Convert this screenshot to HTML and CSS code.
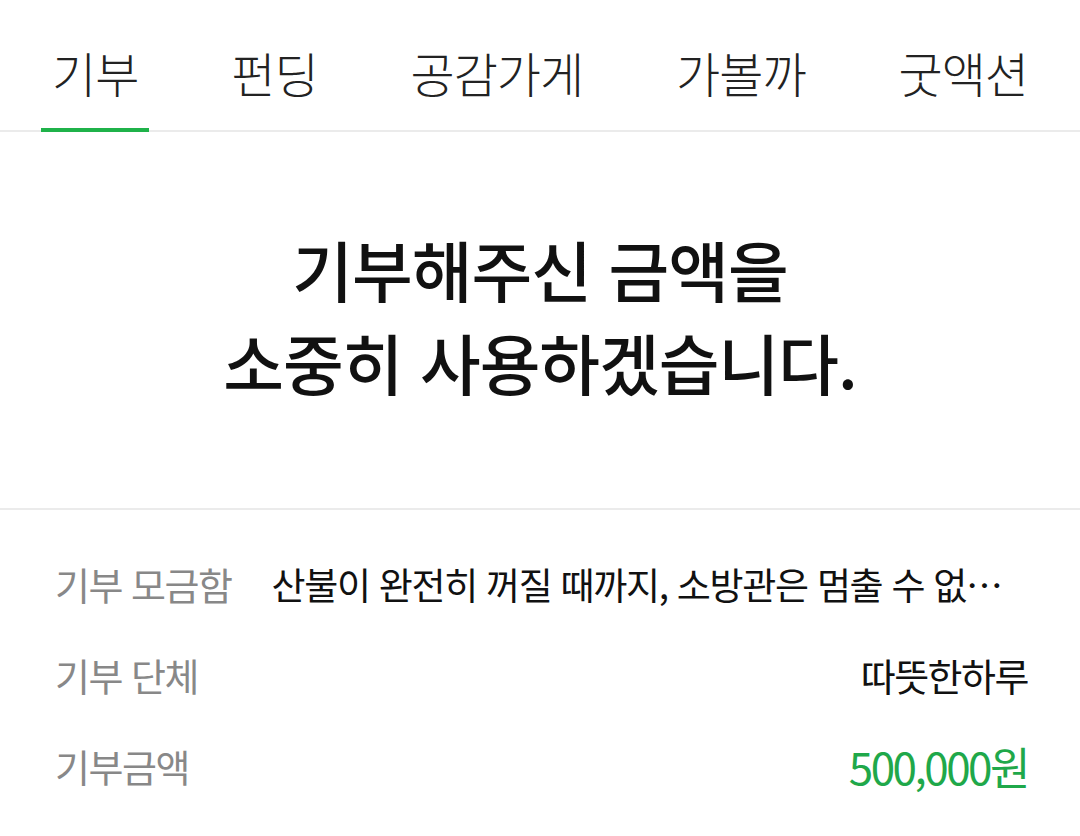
FILE: index.html
```html
<!DOCTYPE html>
<html lang="ko">
<head>
  <meta charset="UTF-8">
  <meta name="viewport" content="width=device-width, initial-scale=1.0">
  <title>기부</title>
  <link rel="stylesheet" href="styles.css">
</head>
<body>
  <nav class="tabs">
    <a class="tab active">기부</a>
    <a class="tab">펀딩</a>
    <a class="tab">공감가게</a>
    <a class="tab">가볼까</a>
    <a class="tab">굿액션</a>
  </nav>

  <section class="thanks">
    <h1>기부해주신 금액을<br>소중히 사용하겠습니다.</h1>
  </section>

  <div class="info">
    <div class="row">
      <span class="label">기부 모금함</span>
      <span class="value title">산불이 완전히 꺼질 때까지, 소방관은 멈출 수 없…</span>
    </div>
    <div class="row">
      <span class="label">기부 단체</span>
      <span class="value">따뜻한하루</span>
    </div>
    <div class="row">
      <span class="label">기부금액</span>
      <span class="value amount">500,000원</span>
    </div>
  </div>
</body>
</html>
```

FILE: styles.css
```css
*,*::before,*::after{
  margin: 0;
  padding: 0;
  box-sizing: border-box;
}
body{
  width: 100%;
  overflow: hidden;
  background: #fff;
  color: #111;
  font-family: "Noto Sans CJK KR", "Noto Sans", sans-serif;
}

.tabs{
  display: flex;
  justify-content: space-between;
  padding: 0 41px;
  height: 132px;
  border-bottom: 2px solid #ebebeb;
}
.tabs .tab{
  display: flex;
  align-items: center;
  padding: 16px 11px 0;
  font-size: 48px;
  font-weight: 300;
  letter-spacing: -1px;
  color: #222;
  border-bottom: 4px solid transparent;
  margin-bottom: -2px;
}
.tabs .tab.active{
  border-bottom-color: #1fb24a;
}

.thanks{
  height: 378px;
  display: flex;
  align-items: center;
  justify-content: center;
  border-bottom: 2px solid #ebebeb;
}
.thanks h1{
  text-align: center;
  font-size: 66px;
  font-weight: 500;
  line-height: 93px;
  letter-spacing: -1px;
  padding-bottom: 10px;
}

.info{
  padding: 28px 52px 0 55px;
}
.info .row{
  display: flex;
  align-items: center;
  justify-content: space-between;
  height: 91px;
  font-size: 38px;
  letter-spacing: -1.5px;
}
.row .label{
  flex-shrink: 0;
  color: #888;
  font-weight: 400;
}
.row .value{
  color: #111;
  white-space: nowrap;
}
.row .value.title{
  margin-left: 40px;
  flex: 1;
  font-size: 37px;
  font-weight: 400;
  letter-spacing: -1.3px;
}
.row .value.amount{
  font-size: 44px;
  letter-spacing: -2.5px;
  color: #1fa84a;
}
```
